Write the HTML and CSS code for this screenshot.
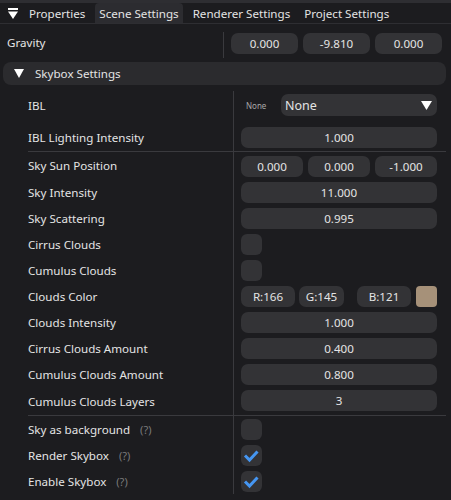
FILE: index.html
```html
<!DOCTYPE html>
<html lang="en">
<head>
    <meta charset="UTF-8">
    <title>Scene Settings</title>
    <link rel="stylesheet" href="styles.css">
</head>
<body>
    <div class="topline"></div>
    <nav class="tabbar">
        <span class="tab-icon">
            <svg width="10" height="12" viewBox="0 0 10 12"><rect x="0" y="0" width="10" height="2" fill="#fff"/><path d="M0 3.5 H10 L5 11 Z" fill="#fff"/></svg>
        </span>
        <span class="tab">Properties</span>
        <span class="tab active">Scene Settings</span>
        <span class="tab">Renderer Settings</span>
        <span class="tab">Project Settings</span>
    </nav>

    <div class="gravity">
        <div class="glabel">Gravity</div>
        <div class="gvalue">
            <div class="field">0.000</div>
            <div class="field">-9.810</div>
            <div class="field">0.000</div>
        </div>
    </div>

    <div class="section-head">
        <svg width="10" height="9" viewBox="0 0 10 9"><path d="M0 0 H10 L5 9 Z" fill="#fff"/></svg>
        <span>Skybox Settings</span>
    </div>

    <div class="table">
        <div class="row ibl">
            <div class="label">IBL</div>
            <div class="value">
                <span class="tiny">None</span>
                <div class="combo"><span>None</span>
                    <svg width="11" height="9" viewBox="0 0 11 9"><path d="M0 0 H11 L5.5 9 Z" fill="#fff"/></svg>
                </div>
            </div>
        </div>
        <div class="row sep-a">
            <div class="label">IBL Lighting Intensity</div>
            <div class="value"><div class="field">1.000</div></div>
        </div>
        <div class="row first">
            <div class="label">Sky Sun Position</div>
            <div class="value">
                <div class="field">0.000</div>
                <div class="field">0.000</div>
                <div class="field">-1.000</div>
            </div>
        </div>
        <div class="row">
            <div class="label">Sky Intensity</div>
            <div class="value"><div class="field">11.000</div></div>
        </div>
        <div class="row">
            <div class="label">Sky Scattering</div>
            <div class="value"><div class="field">0.995</div></div>
        </div>
        <div class="row">
            <div class="label">Cirrus Clouds</div>
            <div class="value"><div class="check"></div></div>
        </div>
        <div class="row">
            <div class="label">Cumulus Clouds</div>
            <div class="value"><div class="check"></div></div>
        </div>
        <div class="row">
            <div class="label">Clouds Color</div>
            <div class="value colors">
                <div class="field c-r">R:166</div>
                <div class="field c-g">G:145</div>
                <div class="field c-b">B:121</div>
                <div class="swatch"></div>
            </div>
        </div>
        <div class="row">
            <div class="label">Clouds Intensity</div>
            <div class="value"><div class="field">1.000</div></div>
        </div>
        <div class="row">
            <div class="label">Cirrus Clouds Amount</div>
            <div class="value"><div class="field">0.400</div></div>
        </div>
        <div class="row">
            <div class="label">Cumulus Clouds Amount</div>
            <div class="value"><div class="field">0.800</div></div>
        </div>
        <div class="row sep-b">
            <div class="label">Cumulus Clouds Layers</div>
            <div class="value"><div class="field">3</div></div>
        </div>
        <div class="row">
            <div class="label">Sky as background <span class="hint">(?)</span></div>
            <div class="value"><div class="check"></div></div>
        </div>
        <div class="row">
            <div class="label">Render Skybox <span class="hint">(?)</span></div>
            <div class="value"><div class="check">
                <svg width="21" height="21" viewBox="0 0 21 21"><path d="M4 10.5 L8.5 15 L16.5 6.5" fill="none" stroke="#4596f2" stroke-width="3"/></svg>
            </div></div>
        </div>
        <div class="row">
            <div class="label">Enable Skybox <span class="hint">(?)</span></div>
            <div class="value"><div class="check">
                <svg width="21" height="21" viewBox="0 0 21 21"><path d="M4 10.5 L8.5 15 L16.5 6.5" fill="none" stroke="#4596f2" stroke-width="3"/></svg>
            </div></div>
        </div>
    </div>
</body>
</html>
```

FILE: styles.css
```css
body {
    margin: 0;
    background-color: #1c1c1f;
    color: #e4e4e4;
    font-family: "Noto Sans", "Open Sans", sans-serif;
    font-size: 11.6px;
    height: 500px;
    overflow: hidden;
}
.topline {
    height: 3px;
    background-color: #2e2e32;
}
.tabbar {
    display: flex;
    align-items: stretch;
    height: 20px;
    border-bottom: 1px solid #2e2e32;
    padding-left: 8px;
    gap: 6px;
}
.tab-icon {
    display: flex;
    align-items: center;
    width: 11px;
    padding-top: 1px;
}
.tab {
    display: flex;
    align-items: center;
    padding: 0 4px;
    border-radius: 4px 4px 0 0;
}
.tab.active {
    background-color: #2c2c30;
}
.gravity {
    display: flex;
    margin-top: 8px;
}
.glabel {
    width: 216px;
    padding-left: 7px;
    line-height: 21px;
}
.gvalue {
    flex: 1;
    display: flex;
    gap: 5px;
    border-left: 1px solid #3a3a3e;
    padding: 1px 9px 4px 7px;
}
.field {
    flex: 1;
    height: 21px;
    line-height: 21px;
    text-align: center;
    background-color: #333336;
    border-radius: 7px;
    color: #e4e4e4;
}
.section-head {
    display: flex;
    align-items: center;
    gap: 11px;
    margin: 4px 5px 0 3px;
    height: 23px;
    padding-left: 11px;
    background-color: #2b2b2e;
    border-radius: 8px;
}
.table {
    margin: 6px 5px 0 28px;
}
.row {
    display: flex;
}
.label {
    width: 205px;
    display: flex;
    align-items: center;
}
.hint {
    color: #7a7a7a;
    margin-left: 10px;
    font-size: 11px;
}
.value {
    flex: 1;
    display: flex;
    align-items: center;
    gap: 5px;
    border-left: 1px solid #3a3a3e;
    padding: 3px 9px 2px 7px;
}
.ibl .value {
    padding-bottom: 8px;
}
.ibl .label {
    padding-bottom: 4px;
}
.sep-a {
    border-bottom: 1px solid #3a3a3e;
}
.sep-a .value {
    padding-bottom: 3px;
}
.row.first .value {
    padding-top: 4px;
}
.sep-b {
    border-bottom: 1px solid #3a3a3e;
}
.sep-b .value {
    padding-bottom: 4px;
}
.tiny {
    width: 35px;
    padding-left: 5px;
    box-sizing: border-box;
    font-size: 8px;
    color: #a8a8a8;
}
.combo {
    flex: 1;
    height: 22px;
    display: flex;
    align-items: center;
    justify-content: space-between;
    padding: 0 5px 0 4px;
    background-color: #333336;
    border-radius: 7px;
    font-size: 12.5px;
}
.check {
    width: 21px;
    height: 21px;
    background-color: #333336;
    border-radius: 6px;
}
.check svg {
    display: block;
}
.colors {
    gap: 0;
}
.colors .field {
    flex: none;
}
.c-r {
    width: 54px;
}
.c-g {
    width: 45px;
    margin-left: 4px;
}
.c-b {
    width: 54px;
    margin-left: 13px;
}
.swatch {
    width: 21px;
    height: 21px;
    margin-left: 5px;
    background-color: #a69179;
    border-radius: 4px;
}
```
